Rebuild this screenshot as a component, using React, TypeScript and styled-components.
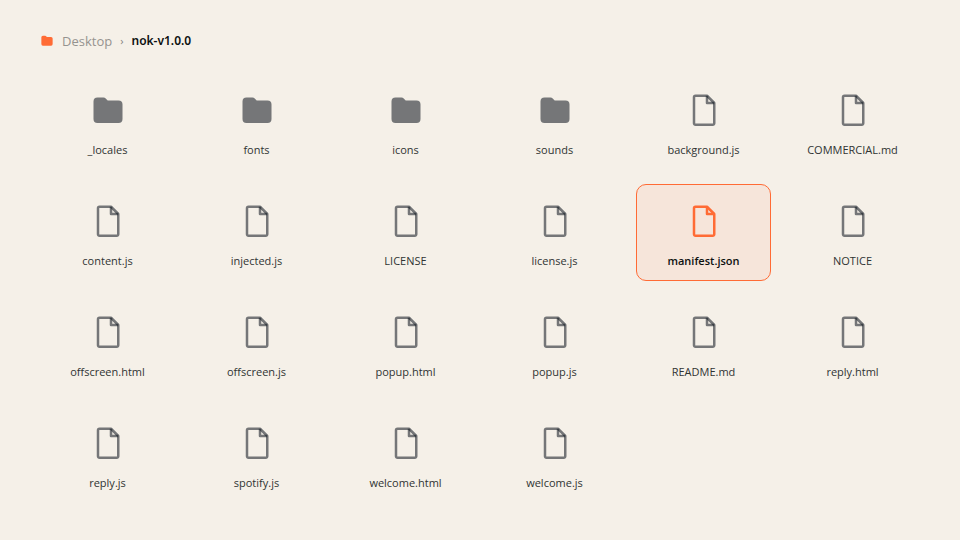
import React, { useState } from "react";
import styled, { createGlobalStyle } from "styled-components";

const GlobalStyle = createGlobalStyle`
  * { box-sizing: border-box; }
  body {
    margin: 0;
    background: #f5f0e8;
    color: #0d1110;
    font-family: "Segoe UI", "Open Sans", "Noto Sans", sans-serif;
  }
`;

const Page = styled.main`
  min-height: 100vh;
  padding: 31px 40px;
`;

const Breadcrumb = styled.nav`
  display: flex;
  align-items: center;
  gap: 8px;
  margin-bottom: 22px;
  font-size: 13px;
  line-height: 20px;
`;

const CrumbIcon = styled.svg`
  width: 14px;
  height: 14px;
  color: #ff6b35;
`;

const CrumbLink = styled.a`
  color: #95938f;
  text-decoration: none;
`;

const Separator = styled.span`
  color: #85837f;
  font-size: 11px;
`;

const Current = styled.span`
  font-family: "Segoe UI", "Noto Sans", sans-serif;
  font-size: 12px;
  font-weight: 600;
`;

const Grid = styled.div`
  display: grid;
  grid-template-columns: repeat(6, minmax(0, 1fr));
  gap: 14px;
`;

const Tile = styled.button<{ $selected: boolean }>`
  display: flex;
  flex-direction: column;
  align-items: center;
  gap: 12px;
  min-width: 0;
  padding: 19px 8px 10px;
  border: 1px solid ${(p) => (p.$selected ? "#ff6b35" : "transparent")};
  border-radius: 10px;
  background: ${(p) => (p.$selected ? "#f6e5da" : "transparent")};
  color: ${(p) => (p.$selected ? "#0d1110" : "#303433")};
  font-family: inherit;
  font-size: 11px;
  font-weight: ${(p) => (p.$selected ? 600 : 400)};
  line-height: 18px;
  cursor: pointer;
`;

const TileIcon = styled.svg<{ $selected: boolean }>`
  width: 36px;
  height: 36px;
  color: ${(p) => (p.$selected ? "#ff6b35" : "#101820")};
`;

const FolderShape = ({ alpha = 1 }: { alpha?: number }) => (
  <path
    d="M3.500 8.500a4 4 0 0 1 4-4h6a3 3 0 0 1 2.200 1l2 2H28.500a4 4 0 0 1 4 4v14.500a4 4 0 0 1-4 4h-21a4 4 0 0 1-4-4z"
    fill="currentColor"
    fillOpacity={alpha}
  />
);

const FileShape = ({ alpha }: { alpha: number }) => (
  <g fill="none" stroke="currentColor" strokeWidth="2.500" strokeOpacity={alpha} strokeLinejoin="round">
    <path d="M9.500 2.750H21l7.250 7.250V30.250a1.500 1.500 0 0 1-1.500 1.500H9.500a1.500 1.500 0 0 1-1.500-1.500V4.250a1.500 1.500 0 0 1 1.500-1.500z" />
    <path d="M21 2.750V10H28.250" />
  </g>
);

type Entry = { name: string; folder?: boolean };

const entries: Entry[] = [
  { name: "_locales", folder: true },
  { name: "fonts", folder: true },
  { name: "icons", folder: true },
  { name: "sounds", folder: true },
  ...[
    "background.js", "COMMERCIAL.md", "content.js", "injected.js", "LICENSE",
    "license.js", "manifest.json", "NOTICE", "offscreen.html", "offscreen.js",
    "popup.html", "popup.js", "README.md", "reply.html", "reply.js",
    "spotify.js", "welcome.html", "welcome.js",
  ].map((name) => ({ name })),
];

export default function App() {
  const [selected, setSelected] = useState("manifest.json");
  return (
    <Page>
      <GlobalStyle />
      <Breadcrumb aria-label="Path">
        <CrumbIcon viewBox="0 0 36 36" aria-hidden="true">
          <FolderShape />
        </CrumbIcon>
        <CrumbLink href="#desktop">Desktop</CrumbLink>
        <Separator aria-hidden="true">›</Separator>
        <Current aria-current="page">nok-v1.0.0</Current>
      </Breadcrumb>
      <Grid>
        {entries.map(({ name, folder }) => {
          const active = name === selected;
          const alpha = active ? 1 : 0.56;
          return (
            <Tile key={name} type="button" $selected={active} aria-pressed={active} onClick={() => setSelected(name)}>
              <TileIcon $selected={active} viewBox="0 0 36 36" aria-hidden="true">
                {folder ? <FolderShape alpha={alpha} /> : <FileShape alpha={alpha} />}
              </TileIcon>
              <span>{name}</span>
            </Tile>
          );
        })}
      </Grid>
    </Page>
  );
}
